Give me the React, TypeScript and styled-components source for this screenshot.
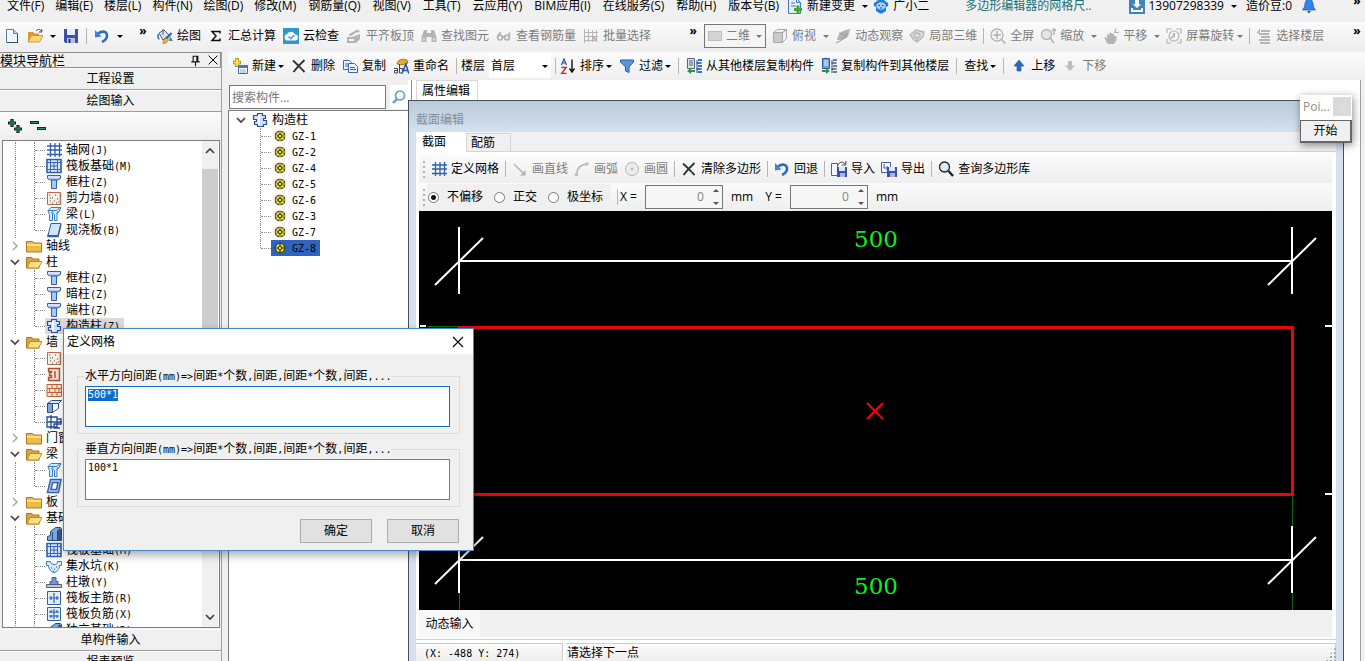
import React, { useEffect, useRef } from "react";
import styled, { createGlobalStyle, css } from "styled-components";

const UI = `"Open Sans", "Noto Sans CJK SC", sans-serif`;

const GlobalStyle = createGlobalStyle`
  * { box-sizing: border-box; }
  html, body, #root { height: 100%; margin: 0; overflow: hidden; }
  body { background: #f0f0f0; font: 12px/16px ${UI}; color: #000; }
  button, input, textarea, select { font: inherit; color: inherit; margin: 0; }
  button { background: none; border: 0; padding: 0; white-space: nowrap; }
`;

/* ---------- icons ---------- */

const B = "#2f5fae";
const G = "#b4b4b4";

const ICONS: Record<string, React.ReactNode> = {
  newDoc: (
    <g>
      <path d="M2.500 1.500h7l4 4v9h-11z" fill="#f2f7ff" stroke="#5a77a8" />
      <path d="M9.500 1.500v4h4" fill="#c5d6f0" stroke="#5a77a8" />
      <path d="M3 14.500h11M13.500 6v8.500" stroke="#33496f" />
    </g>
  ),
  open: (
    <g>
      <path d="M1 4h5l1.500 1.500H12V8L4 14H1z" fill="#d9992b" />
      <path d="M4.500 7.500H16L12.500 14H1z" fill="#ffd978" stroke="#c48a24" strokeWidth=".8" />
      <path d="M9 3c2-2.500 4.500-2 5.500.5M14.800 1v3h-3" fill="none" stroke="#444" />
    </g>
  ),
  save: (
    <g>
      <path d="M1 1h14v14H2.500L1 13.500z" fill="#3e4fae" />
      <path d="M4 1h8v6H4z" fill="#e8edfb" />
      <path d="M4 10h8v5H4z" fill="#b4bfe6" />
      <path d="M5.500 11h2v4h-2z" fill="#26327c" />
    </g>
  ),
  undo: (
    <g>
      <path d="M4 5.500C8 2.500 13 3 13 7.500c0 3-2 5-5 6.500" fill="none" stroke="#2e6cc4" strokeWidth="2.600" />
      <path d="M1 2v7.500l6.500-1z" fill="#3f82dc" />
    </g>
  ),
  paint: (
    <g>
      <path d="M2 5l5-3 5 5-6 5z" fill="#dfe7f3" stroke="#4a6087" />
      <path d="M6 1v6" stroke="#4a6087" />
      <path d="M1.500 6C.5 8 1 11 2.500 11" fill="none" stroke="#3c6fc0" strokeWidth="1.500" />
      <path d="M14.500 5L9 11" stroke="#3163b8" strokeWidth="2" />
      <path d="M6 15.500c0-4 2-5.500 5-5 1 3-2 5-5 5z" fill="#e8bb2d" stroke="#8d6a15" strokeWidth=".6" />
      <path d="M13 8l3 5h-4z" fill="#4c7fd0" />
    </g>
  ),
  sigma: <path d="M12 5.500V3.500H4l4 4.500-4 4.500h8v-2" fill="none" stroke="#111" strokeWidth="1.500" />,
  cloudCheck: (
    <g>
      <path d="M0 0h16v16H0z" fill="#2f98c9" />
      <path d="M4.500 12.500a3.300 3.300 0 01-.3-6.500A4.300 4.300 0 0112 6.500a3 3 0 010 6z" fill="#fff" />
      <path d="M5.500 8.500l2.300 2.300 3.400-3.600" fill="none" stroke="#2f98c9" strokeWidth="1.400" />
    </g>
  ),
  slabTop: (
    <g fill={G}>
      <path d="M2 7l9-5.500 3 1.500-2 2-1-1-6 4z" />
      <path d="M1 9h5l8-3v5l-4 4H1zM3 11v2h5v-2z" fillRule="evenodd" />
    </g>
  ),
  binocular: (
    <g fill={G}>
      <path d="M3 2h3v3h4V2h3l2.500 7v5h-5v-5h-5v5h-5V9z" />
      <path d="M2 10.500h2v2H2zM12 10.500h2v2h-2z" fill="#e6e6e6" />
    </g>
  ),
  glasses: (
    <g fill="none" stroke={G} strokeWidth="1.800">
      <circle cx="4" cy="9.500" r="2.400" />
      <circle cx="11" cy="9.500" r="2.400" />
      <path d="M1.800 8l3-4M13.400 9V4.500M6.500 9h2" />
    </g>
  ),
  batch: (
    <g fill="none" stroke={G}>
      <path d="M1.500 1v14M1 4.500h14M5.500 1v13M9.500 2v12M13.500 2v12M1 8.500h14M1 12.500h11" />
      <path d="M9 8l5 5" strokeWidth="2" />
    </g>
  ),
  view2d: <path d="M1.500 3.500h13v9h-13z" fill="#d4d4d4" stroke="#bdbdbd" />,
  cube: (
    <g fill="#f0f0f0" stroke="#a8a8a8">
      <path d="M1.500 4.500h9v10h-9z" fill="#cacaca" />
      <path d="M1.500 4.500l4-3h9l-4 3zM10.500 4.500l4-3v9l-4 4z" />
    </g>
  ),
  orbit: (
    <g>
      <path d="M2 12C3 5 8 2 15 1c-1 7-4 11-10 11z" fill={G} />
      <path d="M1 15c5-2 9-5 12-10M4 5c3 0 6 2 8 5" stroke="#989898" fill="none" />
    </g>
  ),
  local3d: (
    <g fill="#ddd" stroke={G} strokeWidth="1.300">
      <path d="M1 7l6-5 8 2-1 5-6 5-3-2z" />
      <path d="M5 8a3 2.500 0 106-1 3 2.500 0 10-6 1zM8 14V9" />
    </g>
  ),
  fullscreen: (
    <g fill="none" stroke={G} strokeWidth="1.300">
      <circle cx="7" cy="7" r="6" />
      <path d="M7 3v8M3 7h8M11.500 11.500l4 4" strokeWidth="1.600" />
    </g>
  ),
  zoomIn: (
    <g fill="none" stroke={G} strokeWidth="1.400">
      <circle cx="6.500" cy="6.500" r="5" fill="#e6e6e6" />
      <path d="M10 10l4 5M14 1v6M12 3l2-2 2 2" strokeWidth="1.600" />
    </g>
  ),
  pan: (
    <g fill={G}>
      <path d="M1 9l3 1V6l2 1 1-3 2 1.500 2 .5v2h2.500v4L11 16H4.500z" />
      <path d="M12.500 0l1.500 2h-1v2h2V3l1 1.500L15 6V5h-4z" />
    </g>
  ),
  rotate: (
    <g fill="none" stroke={G} strokeWidth="1.200">
      <path d="M1 5V1h5M10 1h5v5M15 11v4h-4M5 15H1v-4" />
      <circle cx="8" cy="8" r="5" />
      <path d="M8 5v3l-3 2" strokeWidth="2" />
    </g>
  ),
  floors: (
    <g stroke={G} strokeWidth="2">
      <path d="M5 3h9M3 6h10M5 9h9M3 12h11M4 15h10" />
      <path d="M4 1L1 5h3" strokeWidth="1" fill={G} />
    </g>
  ),
  addItem: (
    <g>
      <path d="M5 0v9M1 4.500h8" stroke="#b48a12" strokeWidth="3.600" />
      <path d="M5 1v7M1.800 4.500h6.400" stroke="#ffe04a" strokeWidth="2" />
      <path d="M6.500 7.500h9v8h-9z" fill="#fff" stroke="#4668a8" />
      <path d="M6 7h10v3H6z" fill="#4877c8" />
      <path d="M8 12h6M8 14h6" stroke="#8aa4d2" />
    </g>
  ),
  cross: <path d="M2 2.500c3.500 3 7 7 11.500 11.500M13.500 2C9 6 6 9.500 2.500 14" fill="none" stroke="#333" strokeWidth="1.900" />,
  copy: (
    <g fill="#eef4ff" stroke="#3c66b4">
      <path d="M1.500 2.500h6l2 2v7h-8z" />
      <path d="M3 6h4M3 8h4" />
      <path d="M6.500 5.500h6l3 3v6h-9z" />
      <path d="M8 9.500h5M8 11.500h6" />
    </g>
  ),
  rename: (
    <g>
      <path d="M4 6c0-4 5-6 10-4l1 3-6 2z" fill="#e2ae2b" stroke="#7a5a14" strokeWidth=".7" />
      <path d="M1 10.500h3.500V15H1.500v-2.500h3M6.500 6v9h3v-4.500h-3" fill="none" stroke="#444" />
      <path d="M9 15.500L12.800 6l3 9.500M10.200 12.500h5" fill="none" stroke="#2750b0" strokeWidth="1.500" />
    </g>
  ),
  sort: (
    <g fill="none">
      <path d="M1.500 7L4 1l2.500 6M2.300 5h3.400" stroke="#2c4fa6" strokeWidth="1.200" />
      <path d="M1.500 9.500h4.800l-4.800 6h5" stroke="#a8333c" strokeWidth="1.300" />
      <path d="M12 1.500v12M9.500 10.500l2.500 3.500 2.500-3.500" stroke="#111" strokeWidth="1.400" />
    </g>
  ),
  filter: <path d="M1.500 2h13v2L10 9v5.500L6.500 13V9L1.500 4z" fill="#5d94e2" stroke="#2b5cab" />,
  fromFloor: (
    <g>
      <path d="M1.500.500h7v10h-7z" fill="#d9e0ea" stroke="#56657c" />
      <path d="M3 3h4M3 5h4M3 7h4" stroke="#56657c" />
      <path d="M12 2h4M10.500 5h5M12 8h4M10.500 11h5M12 14h4" stroke="#3a74c8" strokeWidth="2" />
      <path d="M11 2v13" stroke="#2c559a" />
      <path d="M1 13l4-3v2h4v2H5v2z" fill="#2a9440" />
    </g>
  ),
  toFloor: (
    <g>
      <path d="M1.500.500h7v10h-7z" fill="#6f9fe0" stroke="#2a56a4" />
      <path d="M3 3h4M3 5h4M3 7h4" stroke="#e6efff" />
      <path d="M12 2h4M10.500 5h5M12 8h4M10.500 11h5M12 14h4" stroke="#6c7f9e" strokeWidth="2" />
      <path d="M11 2v13" stroke="#44546e" />
      <path d="M9 13l-4-3v2H1v2h4v2z" fill="#2a9440" />
    </g>
  ),
  up: <path d="M8 2l5 6h-3v5H6V8H3z" fill="#2f67c4" stroke="#1f4a98" strokeWidth=".6" />,
  down: <path d="M8 13L3 7.500h3V3h4v4.500h3z" fill="#bcbcbc" />,
  search: (
    <g fill="none" stroke="#5b9fdc">
      <circle cx="9" cy="6.500" r="4.500" strokeWidth="1.700" />
      <path d="M6 10l-4 4" strokeWidth="2.400" />
    </g>
  ),
  magnify: (
    <g fill="none" stroke="#222">
      <circle cx="6.500" cy="6" r="5" fill="#d9ecf8" strokeWidth="1.300" />
      <path d="M10.500 10l4.500 5" strokeWidth="2.400" />
    </g>
  ),
  grid: (
    <g stroke={B} strokeWidth="1.300">
      <path d="M4.500 1v14M9 1v14M13.500 1v14M1 4h15M1 8h15M1 12.500h15" />
    </g>
  ),
  line: (
    <g stroke={G} strokeWidth="1.500" fill={G}>
      <path d="M2 3l9 9" />
      <path d="M13.500 14.500V9L8 14.500z" stroke="none" />
    </g>
  ),
  arc: (
    <g stroke={G} fill="none">
      <path d="M2.500 14C3 7 7 3 14 3" strokeWidth="1.500" />
      <path d="M1.500 12.500h2v2h-2zM12 2h2v2h-2z" fill="#ddd" />
    </g>
  ),
  circle: (
    <g fill="#ececec" stroke={G}>
      <circle cx="8" cy="8" r="6.500" />
      <circle cx="8" cy="8" r="1" fill={G} />
    </g>
  ),
  importIcon: (
    <g>
      <path d="M.500 2.500h6v12h-6z" fill="#f4f7ff" stroke="#4a62a0" />
      <path d="M7 4C8 1 12 0 14 3M14.800 0v4h-4" fill="none" stroke="#444" />
      <path d="M6 6h10v10H6z" fill="#3f4fa8" />
      <path d="M8 6h6v4H8z" fill="#e1e7fa" />
      <path d="M9 12h5v4H9z" fill="#aab6e2" />
    </g>
  ),
  exportIcon: (
    <g>
      <path d="M.500 1.500h9v10h-9z" fill="#f4f7ff" stroke="#4a62a0" />
      <path d="M3 3v4h4M5.500 5l2 2-2 2" fill="none" stroke="#2c5ab0" />
      <path d="M6 6h10v10H6z" fill="#3f4fa8" />
      <path d="M8 6h6v4H8z" fill="#e1e7fa" />
      <path d="M9 12h5v4H9z" fill="#aab6e2" />
    </g>
  ),
  docPlus: (
    <g>
      <path d="M1.500.500h8l4 4v11h-12z" fill="#e4effc" stroke="#4479bd" />
      <path d="M9.500.500v4h4M4 5h4M4 8h5" fill="none" stroke="#4479bd" />
      <path d="M11 7.500v8M7 11.500h8" stroke="#46a52c" strokeWidth="3" />
    </g>
  ),
  mascot: (
    <g>
      <path d="M3 4C1 4 .500 6 1 8l2 1v4l4 2.500h2L13 13V9l2-1c.500-2 0-4-2-4-1-3-9-3-10 0z" fill="#1b80d8" />
      <ellipse cx="8" cy="8" rx="4.800" ry="3.700" fill="#9fd3fb" />
      <path d="M5.500 7.500h1.500M9 7.500h1.500M7 10h2" stroke="#0b4c8c" strokeWidth="1.200" />
    </g>
  ),
  user: (
    <g>
      <path d="M0 0h16v16H0z" fill="#3c86b8" />
      <path d="M6 2h4v4l2 .5L8 10 4 6.500 6 6z" fill="#fff" />
      <path d="M3 10v3h10v-3" fill="none" stroke="#fff" strokeWidth="1.800" />
    </g>
  ),
  bell: (
    <g>
      <path d="M8 1c4 0 4 5 4.500 8l2 3h-13l2-3C4 6 4 1 8 1z" fill="#2f86ea" stroke="#1c56a4" strokeWidth=".7" />
      <path d="M6 13h4l-2 2.500z" fill="#1c56a4" />
    </g>
  ),
  folder: (
    <g>
      <path d="M.500 3.500h6l1 1.500h8v9H.500z" fill="#eebb45" stroke="#a87a1c" />
      <path d="M1 6h14v2H1z" fill="#ffe08d" />
    </g>
  ),
  folderOpen: (
    <g>
      <path d="M.500 3.500h5.500l1 1.500h6v9H.500z" fill="#dfa531" stroke="#a87a1c" />
      <path d="M4 7.500h12L12.500 14H1z" fill="#ffdf85" stroke="#a87a1c" strokeWidth=".8" />
    </g>
  ),
  raft: (
    <g fill="none" stroke={B}>
      <path d="M1 1.500h14v13H1z" strokeWidth="1.600" fill="#dbe8fb" />
      <path d="M4.500 4.500h7v7h-7zM8 4v8M4 8h8M1 4.500h3M12 4.500h3M1 11.500h3M12 11.500h3M4.500 1v3M11.500 1v3M4.500 12v3M11.500 12v3" />
    </g>
  ),
  column: (
    <g fill="#a9c8f4" stroke={B}>
      <path d="M1.500 1.500h13v3l-3 1.500h-7l-3-1.500z" />
      <path d="M5.500 6h5v8.500h-5z" />
      <path d="M2 3h12" stroke="#fff" />
    </g>
  ),
  wall: (
    <g>
      <path d="M1.500 2.500h13v12h-13z" fill="#f8efe8" stroke="#b76e50" />
      <path d="M3 5h1M6 8h1M4 11h1M8 11h1M11 9h1M12 12h1M9 5h1M6 13h1M10 13h1M4 8h1" stroke="#444" />
      <path d="M14.500 3v12" stroke="#b76e50" strokeWidth="1.500" />
    </g>
  ),
  beam: (
    <g fill="#d5ebfa" stroke="#3581c8">
      <path d="M2 4.500l3-3h10l-2 4-2 1v8H8.500v-6L6.500 7v7.500h-3V9z" />
      <path d="M2 4.500h9l3-3M5 7l3-2.500M11 8l3-4" fill="none" />
    </g>
  ),
  slab: (
    <g>
      <path d="M5 1.500h10l-3 12H2z" fill="#d3e5fb" stroke={B} />
      <path d="M2 12.500v2h10l3-12" fill="none" stroke={B} strokeWidth="1.400" />
    </g>
  ),
  slabRing: (
    <g fill="none" stroke={B} strokeWidth="1.500">
      <path d="M4.500 1.500h10.500l-2.500 13H1.500z" fill="#b9d2f5" />
      <path d="M6.500 4.500h5.500l-1.500 7H5z" fill="#fff" />
    </g>
  ),
  tieColumn: (
    <g fill="#cfe0fa" stroke="#27509c">
      <path d="M5.500 1.500h5v2h3v3h-2v2h3v4h-3v2h-6v-2h-3v-3h2v-2h-3v-4h4z" strokeWidth="1.200" />
      <path d="M7 3v10" stroke="#fff" strokeWidth="2" />
    </g>
  ),
  wallI: <path d="M2.500 2.500h11v12h-11v-3h3v-2h-2v-3h2v-1h-3zM9 5v7" fill="#f6ddd0" stroke="#a5502f" strokeWidth="1.400" />,
  brick: (
    <g stroke="#bf6438" fill="none">
      <path d="M1 2.500h14.500v12H1z" fill="#fbe3d4" />
      <path d="M1 6.500h14M1 10.500h14M6 3v3M11 3v3M3.500 7v3M9 7v3M13 7v3M6 11v3M11 11v3" />
    </g>
  ),
  opening: (
    <g stroke="#2c4a7c">
      <path d="M1.500 5.500l4-3h10l-3 3z" fill="#dfe8f4" />
      <path d="M1.500 5.500h5v9h-5z" fill="#7fa6db" />
      <path d="M6.500 5.500h6v5l-6 4z" fill="#fff" />
    </g>
  ),
  hidden: (
    <g fill="none" stroke="#23489a" strokeWidth="1.300">
      <path d="M1 3h10v10H1zM5 1v14M1 8h15M11 5h4v5H8v4h6" />
    </g>
  ),
  foundation: (
    <g stroke="#234b80">
      <path d="M1.500 14.500v-4l3-1v-4l5-4h5l-3 4v9z" fill="#79a9dc" />
      <path d="M11.500 5.500l4-3v12h-4zM6.500 6v8" fill="#31588f" />
    </g>
  ),
  pit: (
    <g fill="#d5e9fb" stroke="#3a7cc4">
      <path d="M.500 3.500h4c0 4 7 4 7 0h4v4h-2c0 4-3 7-5.500 7S2.500 11 2.500 7.500h-2z" />
      <path d="M5 10h1M8 11h1M10 9h1M7 13h1" stroke="#444" />
    </g>
  ),
  pier: (
    <g stroke="#4a5f80">
      <path d="M6 3.500h4v4h2v3H4v-3h2z" fill="#6f9bdc" />
      <path d="M.500 10.500h15v3H.500z" fill="#c9c9c9" />
    </g>
  ),
  mainBar: (
    <g fill="none" stroke={B}>
      <path d="M1.500 1.500h13v13h-13z" fill="#e2edfc" />
      <path d="M8 3v10M3 8h10M5 6v4M11 6v4" strokeWidth="1.200" />
    </g>
  ),
  negBar: (
    <g fill="none" stroke={B}>
      <path d="M1.500 1.500h13v13h-13z" fill="#e2edfc" />
      <path d="M8 3v10M3 6h10M3 10h10M5 4v3M11 4v3M5 9v3M11 9v3" strokeWidth="1.200" />
    </g>
  ),
  gear: (
    <g>
      <path d="M6 3v10M10 3v10M3 6h10M3 10h10" stroke="#1c1c08" strokeWidth="2.400" />
      <path d="M6 3.500v9M10 3.500v9M3.500 6h9M3.500 10h9" stroke="#efea20" strokeWidth="1.200" />
      <circle cx="8" cy="8" r="3.600" fill="#efea20" />
      <path d="M8 2.500v11M2.500 8h11" stroke="#1c1c08" strokeDasharray="1.500 1" />
      <circle cx="8" cy="8" r="1.800" fill="#f6f24a" stroke="#1c1c08" />
    </g>
  ),
  plus2: (
    <g>
      <path d="M5 1v8M1 5h8M11 7v8M7 11h8" stroke="#0c2c24" strokeWidth="3.200" />
      <path d="M5 2v6M2 5h6M11 8v6M8 11h6" stroke="#2f9079" strokeWidth="1" />
    </g>
  ),
  minus2: (
    <g>
      <path d="M0 4.500h9M7 10.500h9" stroke="#0c2c24" strokeWidth="3" />
      <path d="M1 4.500h7M8 10.500h7" stroke="#2f9079" strokeWidth="1" />
    </g>
  ),
  pin: <path d="M5.500 3v6M5.500 3.500h5M9.500 3v6M10.500 3v6M3.500 9.500h9M8 9.500V14" stroke="#111" strokeWidth="1.200" fill="none" />,
  close: <path d="M3 3l10 10M13 3L3 13" stroke="currentColor" strokeWidth="1.100" />,
  chevDown: <path d="M4 6l4 4 4-4" fill="none" stroke="#404040" strokeWidth="1.700" />,
  chevUp: <path d="M4 10l4-4 4 4" fill="none" stroke="#404040" strokeWidth="1.700" />,
  chevRight: <path d="M6 4l4 4-4 4" fill="none" stroke="#a0a0a0" strokeWidth="1.400" />,
};

const Svg = styled.svg`
  display: block;
  flex: none;
`;

const Icon = ({ name, size = 16 }: { name: string; size?: number }) => (
  <Svg width={size} height={size} viewBox="0 0 16 16" aria-hidden="true">
    {ICONS[name]}
  </Svg>
);

/* ---------- mixed-width text ---------- */

const Mono = styled.span`
  font: 10px/12px "DejaVu Sans Mono", monospace;
  white-space: pre;
`;

const Mixed = ({ text }: { text: string }) => (
  <span>
    {text
      .split(/([\x20-\x7e]+)/)
      .filter(Boolean)
      .map((run, i) => (/^[\x20-\x7e]/.test(run) ? <Mono key={i}>{run}</Mono> : run))}
  </span>
);

/* ---------- bars ---------- */

const barFill = css`
  background: linear-gradient(#fbfbfb, #eeeeee);
`;

const Page = styled.div`
  height: 100vh;
  display: flex;
  flex-direction: column;
  overflow: hidden;
  background: #f0f0f0;
`;

const MenuBar = styled.nav`
  flex: none;
  height: 28px;
  margin: -8px 0 2px;
  padding: 0 4px 0 7px;
  display: flex;
  align-items: center;
  gap: 8px;
`;

const MenuButton = styled.button<{ $tone?: string }>`
  display: flex;
  align-items: center;
  gap: 4px;
  color: ${(p) => p.$tone || "#000"};
`;

const MenuGroup = styled.div<{ $before?: number; $gap?: number }>`
  display: flex;
  align-items: center;
  gap: ${(p) => p.$gap ?? 11}px;
  margin-left: ${(p) => p.$before ?? 0}px;
`;

const Arrow = styled.span<{ $before?: number; $off?: boolean }>`
  flex: none;
  margin-left: ${(p) => p.$before ?? 0}px;
  border: 3px solid transparent;
  border-bottom-width: 0;
  border-top-color: ${(p) => (p.$off ? "#777" : "#000")};
`;

const ToolBar = styled.div`
  ${barFill}
  flex: none;
  height: 28px;
  display: flex;
  align-items: center;
  gap: 7px;
  padding: 0 4px;
`;

const Tools = styled.div<{ $before?: number; $gap?: number }>`
  display: flex;
  align-items: center;
  gap: ${(p) => p.$gap ?? 7}px;
  margin-left: ${(p) => p.$before ?? 0}px;
`;

const ToolButton = styled.button`
  flex: none;
  display: flex;
  align-items: center;
  svg + span {
    margin-left: 4px;
  }
  &:disabled {
    color: #7c7c7c;
  }
`;

const Sep = styled.span`
  flex: none;
  width: 1px;
  height: 16px;
  background: #b5b5b5;
`;

const More = styled.button`
  flex: none;
  width: 8px;
  padding-bottom: 10px;
  font-weight: 700;
`;

const Spring = styled.span`
  flex: 1;
`;

const Tool = ({ icon, label, off, arrow }: { icon?: string; label?: string; off?: boolean; arrow?: number }) => (
  <ToolButton type="button" disabled={off} aria-label={label || icon}>
    {icon && <Icon name={icon} />}
    {label && <span>{label}</span>}
    {arrow !== undefined && <ArrowBox $before={arrow}><Arrow $off={off} /></ArrowBox>}
  </ToolButton>
);

const ArrowBox = styled.i<{ $before: number }>`
  display: flex;
  padding-left: ${(p) => p.$before}px;
`;

const Combo = styled.label<{ $framed?: boolean }>`
  flex: none;
  height: 24px;
  display: flex;
  align-items: center;
  gap: 3px;
  padding: 0 3px 0 2px;
  background: ${(p) => (p.$framed ? "#f4f4f4" : "#fff")};
  border: ${(p) => (p.$framed ? "1px solid #777" : "0")};
  color: ${(p) => (p.$framed ? "#7c7c7c" : "#000")};
`;

const Select = styled.select<{ $w: number }>`
  appearance: none;
  border: 0;
  background: none;
  padding: 0;
  width: ${(p) => p.$w}px;
  height: 20px;
  outline: 0;
`;

/* ---------- workspace ---------- */

const Work = styled.main`
  flex: 1;
  min-height: 0;
  margin-top: 2px;
  display: flex;
  gap: 6px;
`;

const Nav = styled.aside`
  flex: none;
  width: 222px;
  margin-bottom: -12px;
  display: flex;
  flex-direction: column;
  border-right: 1px solid #a0a0a0;
`;

const NavHeader = styled.header`
  flex: none;
  height: 16px;
  display: flex;
  align-items: center;
  gap: 3px;
  border: 1px solid #8c8c8c;
  border-left: 0;
  font-size: 13px;
  line-height: 14px;
  white-space: nowrap;
`;

const NavButton = styled.button`
  flex: none;
  height: 22px;
  border: solid #9a9a9a;
  border-width: 1px 0;
  border-top-color: #fff;
  text-align: center;
`;

const NavTools = styled.div`
  ${barFill}
  flex: none;
  height: 28px;
  display: flex;
  align-items: center;
  gap: 7px;
  padding-left: 7px;
`;

const TreeFrame = styled.div`
  flex: 1;
  min-height: 0;
  display: flex;
  margin: 0 1px 1px 2px;
  border: 1px solid #7d7d7d;
  background: #fff;
`;

const TreeList = styled.ul`
  flex: 1;
  min-width: 0;
  margin: 0;
  padding: 1px 0 0;
  list-style: none;
  overflow: hidden;
`;

const Branch = styled.li`
  height: 16px;
  display: flex;
  align-items: center;
  white-space: nowrap;
`;

/* Vertical rail of the outer level; a parent row shows its chevron here. */
const Rail = styled.span`
  flex: none;
  width: 22px;
  height: 16px;
  padding-left: 4px;
  position: relative;
`;

const RailLine = styled(Rail)`
  &::after {
    content: "";
    position: absolute;
    left: 12px;
    top: 0;
    bottom: 0;
    border-left: 1px dotted #8a8a8a;
  }
`;

const Elbow = styled.span<{ $last?: boolean }>`
  flex: none;
  width: 11px;
  height: 16px;
  margin-left: 9px;
  position: relative;
  &::before {
    content: "";
    position: absolute;
    left: 0;
    top: 0;
    height: ${(p) => (p.$last ? 8 : 16)}px;
    border-left: 1px dotted #8a8a8a;
  }
  &::after {
    content: "";
    position: absolute;
    left: 1px;
    right: 0;
    top: 8px;
    border-top: 1px dotted #8a8a8a;
  }
`;

const Leaf = styled.span<{ $bg?: string }>`
  height: 16px;
  display: flex;
  align-items: center;
  gap: 4px;
  padding: 0 4px 0 1px;
  background: ${(p) => p.$bg || "transparent"};
`;

const ScrollTrack = styled.div`
  flex: none;
  width: 16px;
  display: flex;
  flex-direction: column;
  margin-right: 1px;
  background: #f0f0f0;
`;

const ScrollEnd = styled.button`
  flex: none;
  height: 20px;
`;

const Thumb = styled.div`
  flex: none;
  height: 78%;
  margin: 8px 0 auto;
  background: #cdcdcd;
`;

const Stage = styled.div`
  flex: 1;
  min-width: 0;
  display: flex;
  flex-direction: column;
`;

const Panes = styled.div`
  flex: 1;
  min-height: 0;
  display: flex;
`;

const ListPane = styled.section`
  flex: none;
  width: 180px;
  display: flex;
  flex-direction: column;
`;

const SearchRow = styled.div`
  flex: none;
  height: 30px;
  display: flex;
  align-items: center;
  gap: 4px;
  padding: 4px 0 0 1px;
`;

const SearchInput = styled.input`
  width: 157px;
  height: 24px;
  padding: 0 2px;
  border: 1px solid #777;
  background: #fff;
  &::placeholder {
    color: #767676;
    opacity: 1;
  }
`;

const SearchButton = styled.button`
  flex: 1;
  height: 24px;
  background: #fff;
  display: flex;
  align-items: center;
  justify-content: center;
`;

const ItemFrame = styled.div`
  flex: 1;
  display: flex;
  border: solid #7d7d7d;
  border-width: 1px 0 0 1px;
  background: #fff;
`;

const PropertyPane = styled.section`
  flex: 1;
  min-width: 0;
  display: flex;
  flex-direction: column;
  padding-right: 21px;
  background: #fff;
  box-shadow: inset -4px 0 #f0f0f0, inset -5px 0 #a0a0a0;
`;

const PropertyTabs = styled.div`
  flex: none;
  height: 20px;
  margin-left: 3px;
  padding-left: 4px;
  display: flex;
  border-left: 1px solid #8c8c8c;
`;

const PropertyTab = styled.button`
  padding: 0 7px 0 5px;
  border: 1px solid #d9d9d9;
  border-bottom: 0;
`;

const SectionWindow = styled.section`
  flex: 1;
  min-height: 0;
  display: flex;
  flex-direction: column;
  padding: 0 7px;
  border: solid #46505a;
  border-width: 1px 1px 0;
  background: linear-gradient(#b9cad9, #d5e1ee 31px);
`;

const SectionTitle = styled.h2`
  flex: none;
  height: 31px;
  margin: 0;
  padding-top: 11px;
  font: inherit;
  color: #858d96;
`;

const SectionTabs = styled.div`
  flex: none;
  height: 20px;
  display: flex;
  align-items: flex-end;
  background: #f0f0f0;
  border-bottom: 1px solid #d5d5d5;
`;

const SectionTab = styled.button<{ $active?: boolean }>`
  height: ${(p) => (p.$active ? 20 : 18)}px;
  width: ${(p) => (p.$active ? 50 : 45)}px;
  padding-left: ${(p) => (p.$active ? 6 : 4)}px;
  text-align: left;
  border: ${(p) => (p.$active ? "0" : "1px solid #d5d5d5")};
  border-bottom: 0;
  background: ${(p) => (p.$active ? "#fff" : "#f0f0f0")};
  margin-bottom: ${(p) => (p.$active ? -1 : 0)}px;
`;

const SectionBody = styled.div`
  flex: 1;
  min-height: 0;
  display: flex;
  flex-direction: column;
  padding: 3px 4px 2px 3px;
  background: #fff;
  border-bottom: 1px solid #d0d0d0;
`;

const SectionBar = styled.div`
  ${barFill}
  flex: none;
  height: 28px;
  display: flex;
  align-items: center;
  gap: 6px;
  padding-left: 4px;
`;

const Grip = styled.span`
  flex: none;
  width: 2px;
  height: 17px;
  background: repeating-linear-gradient(#b0b0b0 0 2px, transparent 2px 5px);
`;

const RadioGroup = styled.div`
  flex: none;
  height: 26px;
  display: flex;
  align-items: center;
  gap: 11px;
  padding: 0 8px 0 1px;
  margin-left: -4px;
  background: #f0f0f0;
`;

const RadioLabel = styled.label`
  display: flex;
  align-items: center;
  gap: 8px;
`;

const Radio = styled.input`
  appearance: none;
  width: 11px;
  height: 11px;
  border: 1px solid #777;
  border-radius: 50%;
  background: #fff;
  &:checked {
    background: radial-gradient(#111 0 2px, #fff 3px);
  }
`;

const Offsets = styled.div`
  display: flex;
  align-items: center;
  gap: 12px;
  margin-left: -4px;
`;

const OffsetLabel = styled.label`
  flex: none;
  display: flex;
  align-items: center;
  gap: 8px;
  white-space: pre;
`;

const Spinner = styled.span`
  display: flex;
  align-items: center;
  width: 78px;
  height: 24px;
  padding-right: 3px;
  border: 1px solid #777;
  background: #f6f6f6;
`;

const SpinnerInput = styled.input`
  flex: 1;
  min-width: 0;
  border: 0;
  padding: 0 9px 0 0;
  background: none;
  text-align: right;
  color: #858585;
`;

const SpinnerArrows = styled.span`
  display: flex;
  flex-direction: column;
  gap: 10px;
`;

const Tip = styled.button<{ $up?: boolean }>`
  border: 3px solid transparent;
  ${(p) => (p.$up ? "border-top-width: 0; border-bottom-color: #555;" : "border-bottom-width: 0; border-top-color: #555;")}
`;

const Canvas = styled.div`
  flex: 1;
  min-height: 0;
  background: #000;
  svg {
    display: block;
    width: 100%;
    height: 100%;
  }
`;

const InputBar = styled.div`
  flex: none;
  height: 27px;
  display: flex;
  background: #f0f0f0;
`;

const InputButton = styled.button`
  width: 61px;
  background: #f8f8f8;
`;

const StatusBar = styled.footer`
  flex: none;
  height: 21px;
  display: flex;
  gap: 3px;
  padding-top: 3px;
  background: #fff;
`;

const StatusCell = styled.span<{ $w?: number }>`
  ${barFill}
  ${(p) => (p.$w ? `flex: none; width: ${p.$w}px; padding-left: 8px;` : "flex: 1; padding-left: 1px;")}
  border-top: 1px solid #cfcfcf;
  border-right: 1px solid #cfcfcf;
  line-height: 18px;
`;

const SizeGrip = styled.span`
  flex: none;
  width: 11px;
  margin-left: -14px;
  background: radial-gradient(circle, #a8a8a8 1px, transparent 1px) 0 0 / 4px 4px;
  clip-path: polygon(100% 20%, 100% 100%, 0 100%);
`;

/* ---------- floating windows ---------- */

const Dialog = styled.form`
  position: absolute;
  left: 63px;
  top: 328px;
  width: 411px;
  height: 223px;
  display: flex;
  flex-direction: column;
  border: 1px solid #3f8bd2;
  background: #f0f0f0;
  box-shadow: 2px 4px 9px rgba(0, 0, 0, 0.35);
`;

const DialogTitle = styled.header`
  flex: none;
  height: 25px;
  padding: 0 7px 0 3px;
  display: flex;
  align-items: center;
  justify-content: space-between;
  background: #fff;
`;

const DialogBody = styled.div`
  padding: 14px 13px 0;
  display: flex;
  flex-direction: column;
  gap: 7px;
`;

const Group = styled.fieldset`
  margin: 0;
  padding: 2px 9px 6px 7px;
  min-width: 0;
  border: 1px solid #dcdcdc;
`;

const Legend = styled.legend`
  padding: 0;
  height: 16px;
  white-space: nowrap;
`;

const Area = styled.textarea`
  display: block;
  width: 100%;
  height: 41px;
  padding: 2px;
  border: 1px solid #7a7a7a;
  outline: 0;
  resize: none;
  background: #fff;
  font: 10px/12px "DejaVu Sans Mono", monospace;
  &:focus {
    border-color: #0f6cbd;
  }
  &::selection {
    background: #0c6cc8;
    color: #fff;
  }
`;

const DialogButtons = styled.div`
  display: flex;
  justify-content: flex-end;
  gap: 15px;
  padding: 5px 1px 0 0;
`;

const DialogButton = styled.button`
  width: 72px;
  height: 24px;
  border: 1px solid #adadad;
  background: #e1e1e1;
`;

const Floating = styled.aside`
  position: absolute;
  right: 13px;
  top: 95px;
  width: 52px;
  background: #fff;
  box-shadow: 1px 2px 8px rgba(0, 0, 0, 0.45);
`;

const FloatingTitle = styled.header`
  height: 25px;
  padding: 2px 1px 0 3px;
  display: flex;
  justify-content: space-between;
  color: #8f8f8f;
  line-height: 20px;
`;

const FloatingClose = styled.button`
  width: 18px;
  height: 19px;
  background: #dadada;
  color: #e8e8e8;
  display: flex;
  align-items: center;
  justify-content: center;
`;

const FloatingButton = styled.button`
  display: block;
  width: 100%;
  height: 23px;
  background: #f0f0f0;
  border: solid #666;
  border-width: 1px 2px 2px 1px;
`;

/* ---------- data ---------- */

const EDIT_MENUS = ["文件(F)", "编辑(E)", "楼层(L)", "构件(N)", "绘图(D)", "修改(M)"];

const APP_MENUS = [
  "钢筋量(Q)", "视图(V)", "工具(T)", "云应用(Y)", "BIM应用(I)", "在线服务(S)", "帮助(H)", "版本号(B)",
];

type Node = { kind: "open" | "shut" | "leaf"; icon?: string; text: string; last?: boolean; active?: boolean };
const leaf = (icon: string, text: string, last = false, active = false): Node => ({ kind: "leaf", icon, text, last, active });

const TREE: Node[] = [
  leaf("grid", "轴网(J)"),
  leaf("raft", "筏板基础(M)"),
  leaf("column", "框柱(Z)"),
  leaf("wall", "剪力墙(Q)"),
  leaf("beam", "梁(L)"),
  leaf("slab", "现浇板(B)", true),
  { kind: "shut", text: "轴线" },
  { kind: "open", text: "柱" },
  leaf("column", "框柱(Z)"),
  leaf("column", "暗柱(Z)"),
  leaf("column", "端柱(Z)"),
  leaf("tieColumn", "构造柱(Z)", true, true),
  { kind: "open", text: "墙" },
  leaf("wall", "剪力墙(Q)"),
  leaf("wallI", "人防门框墙(RF)"),
  leaf("brick", "砌体墙(Q)"),
  leaf("opening", "暗梁(A)"),
  leaf("hidden", "砌体加筋(Y)", true),
  { kind: "shut", text: "门窗洞" },
  { kind: "open", text: "梁" },
  leaf("beam", "梁(L)"),
  leaf("slabRing", "圈梁(E)", true),
  { kind: "shut", text: "板" },
  { kind: "open", text: "基础" },
  leaf("foundation", "基础梁(F)"),
  leaf("raft", "筏板基础(M)"),
  leaf("pit", "集水坑(K)"),
  leaf("pier", "柱墩(Y)"),
  leaf("mainBar", "筏板主筋(R)"),
  leaf("negBar", "筏板负筋(X)"),
  leaf("foundation", "独立基础(D)"),
];

const ITEMS = ["GZ-1", "GZ-2", "GZ-4", "GZ-5", "GZ-6", "GZ-3", "GZ-7", "GZ-8"];

const TreeRow = ({ node }: { node: Node }) =>
  node.kind === "leaf" ? (
    <Branch>
      <RailLine />
      <Elbow $last={node.last} />
      <Leaf $bg={node.active ? "#d9d9d9" : undefined}>
        <Icon name={node.icon!} />
        <Mixed text={node.text} />
      </Leaf>
    </Branch>
  ) : (
    <Branch>
      <Rail>
        <Icon name={node.kind === "open" ? "chevDown" : "chevRight"} />
      </Rail>
      <Leaf>
        <Icon name={node.kind === "open" ? "folderOpen" : "folder"} />
        <span>{node.text}</span>
      </Leaf>
    </Branch>
  );

const Offset = ({ axis }: { axis: string }) => (
  <OffsetLabel>
    {axis + " ="}
    <Spinner>
      <SpinnerInput defaultValue="0" />
      <SpinnerArrows>
        <Tip type="button" $up aria-label="增加" />
        <Tip type="button" aria-label="减少" />
      </SpinnerArrows>
    </Spinner>
    mm
  </OffsetLabel>
);

const Dimension = ({ y }: { y: number }) => (
  <g stroke="#fff" strokeWidth="2">
    <path d={`M40 ${y}H873M40 ${y - 34}v67M873 ${y - 34}v67`} />
    <path d={`M16 ${y + 24}l48-47M849 ${y + 24}l48-47`} />
  </g>
);

const Drawing = () => (
  <svg viewBox="0 0 913 399" preserveAspectRatio="none">
    <path d="M40.500 283V399M873.500 283V399M8 115.500H40" stroke="#0b6a1c" />
    <Dimension y={50} />
    <Dimension y={349} />
    <path d="M1 115h6M906 115h7M906 283h7" stroke="#fff" strokeWidth="2" />
    <path d="M40 116.500H873.500V283.500H40z" fill="none" stroke="#e60808" strokeWidth="3" />
    <path d="M448 192l16 16M464 192l-16 16" stroke="#f00" strokeWidth="2" />
    <g fill="#0cf01c" fontFamily="DejaVu Serif, serif" fontSize="23" textAnchor="middle">
      <text x="457" y="36">500</text>
      <text x="457" y="383">500</text>
    </g>
  </svg>
);

const GridDialog = () => {
  const first = useRef<HTMLTextAreaElement>(null);
  useEffect(() => {
    first.current?.focus();
    first.current?.select();
  }, []);
  return (
    <Dialog role="dialog" aria-label="定义网格" onSubmit={(e) => e.preventDefault()}>
      <DialogTitle>
        定义网格
        <button type="button" aria-label="关闭">
          <Icon name="close" />
        </button>
      </DialogTitle>
      <DialogBody>
        <Group>
          <Legend id="horizontal">
            <Mixed text="水平方向间距(mm)=>间距*个数,间距,间距*个数,间距,..." />
          </Legend>
          <Area ref={first} aria-labelledby="horizontal" defaultValue="500*1" spellCheck={false} />
        </Group>
        <Group>
          <Legend id="vertical">
            <Mixed text="垂直方向间距(mm)=>间距*个数,间距,间距*个数,间距,..." />
          </Legend>
          <Area aria-labelledby="vertical" defaultValue="100*1" spellCheck={false} />
        </Group>
        <DialogButtons>
          <DialogButton type="submit">确定</DialogButton>
          <DialogButton type="button">取消</DialogButton>
        </DialogButtons>
      </DialogBody>
    </Dialog>
  );
};

const MenuList = ({ names }: { names: string[] }) => (
  <>
    {names.map((name) => (
      <MenuButton type="button" key={name}>
        {name}
      </MenuButton>
    ))}
  </>
);

export default function App() {
  return (
    <Page>
      <GlobalStyle />
      <MenuBar>
        <MenuGroup>
          <MenuList names={EDIT_MENUS} />
        </MenuGroup>
        <MenuGroup $before={4} $gap={12}>
          <MenuList names={APP_MENUS} />
        </MenuGroup>
        <MenuGroup $gap={5}>
          <MenuButton type="button">
            <Icon name="docPlus" />
            新建变更
            <Arrow $before={3} />
          </MenuButton>
          <MenuButton type="button">
            <Icon name="mascot" />
            广小二
          </MenuButton>
        </MenuGroup>
        <MenuGroup $before={28}>
          <MenuButton type="button" $tone="#1d6f6f">
            多边形编辑器的网格尺..
          </MenuButton>
        </MenuGroup>
        <Spring />
        <MenuGroup $gap={9}>
          <MenuButton type="button">
            <Icon name="user" />
            13907298339
            <Arrow $before={3} />
          </MenuButton>
          <MenuButton type="button">造价豆:0</MenuButton>
          <MenuButton type="button" aria-label="消息">
            <Icon name="bell" />
          </MenuButton>
        </MenuGroup>
        <MenuGroup $before={28}>
          <More type="button">»</More>
        </MenuGroup>
      </MenuBar>

      <ToolBar>
        <Tools>
          <Tool icon="newDoc" />
          <Tool icon="open" arrow={7} />
          <Tool icon="save" />
          <Sep />
          <Tool icon="undo" arrow={7} />
        </Tools>
        <Tools $before={9}>
          <More type="button">»</More>
        </Tools>
        <Tools $before={3}>
          <Tool icon="paint" label="绘图" />
          <Tool icon="sigma" label="汇总计算" />
          <Tool icon="cloudCheck" label="云检查" />
          <Tool icon="slabTop" label="平齐板顶" off />
          <Tool icon="binocular" label="查找图元" off />
          <Tool icon="glasses" label="查看钢筋量" off />
          <Tool icon="batch" label="批量选择" off />
        </Tools>
        <Tools $before={31}>
          <More type="button">»</More>
        </Tools>
        <Tools $gap={6}>
          <Combo $framed>
            <Icon name="view2d" />
            <Select $w={27} aria-label="视图模式" defaultValue="二维">
              <option>二维</option>
            </Select>
            <Arrow $off />
          </Combo>
          <Tool icon="cube" label="俯视" off arrow={7} />
          <Tool icon="orbit" label="动态观察" off />
          <Tool icon="local3d" label="局部三维" off />
          <Sep />
          <Tool icon="fullscreen" label="全屏" off />
          <Tool icon="zoomIn" label="缩放" off arrow={7} />
          <Tool icon="pan" label="平移" off arrow={7} />
          <Tool icon="rotate" label="屏幕旋转" off arrow={3} />
          <Sep />
          <Tool icon="floors" label="选择楼层" off />
        </Tools>
        <Spring />
        <More type="button">»</More>
      </ToolBar>

      <Work>
        <Nav>
          <NavHeader>
            <span>模块导航栏</span>
            <Spring />
            <button type="button" aria-label="固定">
              <Icon name="pin" size={15} />
            </button>
            <button type="button" aria-label="关闭">
              <Icon name="close" size={14} />
            </button>
          </NavHeader>
          <NavButton type="button">工程设置</NavButton>
          <NavButton type="button">绘图输入</NavButton>
          <NavTools>
            <Tool icon="plus2" />
            <Tool icon="minus2" />
          </NavTools>
          <TreeFrame>
            <TreeList>
              {TREE.map((node, i) => (
                <TreeRow node={node} key={i} />
              ))}
            </TreeList>
            <ScrollTrack>
              <ScrollEnd type="button" aria-label="向上滚动">
                <Icon name="chevUp" />
              </ScrollEnd>
              <Thumb />
              <ScrollEnd type="button" aria-label="向下滚动">
                <Icon name="chevDown" />
              </ScrollEnd>
            </ScrollTrack>
          </TreeFrame>
          <NavButton type="button">单构件输入</NavButton>
          <NavButton type="button">报表预览</NavButton>
        </Nav>

        <Stage>
          <ToolBar>
            <Tool icon="addItem" label="新建" arrow={2} />
            <Tool icon="cross" label="删除" />
            <Tool icon="copy" label="复制" />
            <Tool icon="rename" label="重命名" />
            <Tools $gap={4}>
              <Sep />
              <label htmlFor="floor">楼层</label>
              <Combo>
                <Select id="floor" $w={48} defaultValue="首层">
                  <option>首层</option>
                </Select>
                <Arrow />
              </Combo>
              <Sep />
              <Tool icon="sort" label="排序" arrow={2} />
            </Tools>
            <Tool icon="filter" label="过滤" arrow={2} />
            <Sep />
            <Tool icon="fromFloor" label="从其他楼层复制构件" />
            <Tool icon="toFloor" label="复制构件到其他楼层" />
            <Sep />
            <Tool label="查找" arrow={2} />
            <Sep />
            <Tool icon="up" label="上移" />
            <Tool icon="down" label="下移" off />
          </ToolBar>
          <Panes>
            <ListPane>
              <SearchRow>
                <SearchInput placeholder="搜索构件..." aria-label="搜索构件" />
                <SearchButton type="button" aria-label="搜索">
                  <Icon name="search" />
                </SearchButton>
              </SearchRow>
              <ItemFrame>
                <TreeList>
                  <Branch>
                    <Rail>
                      <Icon name="chevDown" />
                    </Rail>
                    <Leaf>
                      <Icon name="tieColumn" />
                      <span>构造柱</span>
                    </Leaf>
                  </Branch>
                  {ITEMS.map((name, i) => (
                    <Branch key={name}>
                      <Rail />
                      <Elbow $last={i === ITEMS.length - 1} />
                      <Leaf $bg={name === "GZ-8" ? "#2f63c0" : undefined}>
                        <Icon name="gear" />
                        <Mixed text={name} />
                      </Leaf>
                    </Branch>
                  ))}
                </TreeList>
              </ItemFrame>
            </ListPane>
            <PropertyPane>
              <PropertyTabs>
                <PropertyTab type="button">属性编辑</PropertyTab>
              </PropertyTabs>
              <SectionWindow>
                <SectionTitle>截面编辑</SectionTitle>
                <SectionTabs>
                  <SectionTab type="button" $active>
                    截面
                  </SectionTab>
                  <SectionTab type="button">配筋</SectionTab>
                </SectionTabs>
                <SectionBody>
                  <SectionBar>
                    <Grip />
                    <Tool icon="grid" label="定义网格" />
                    <Sep />
                    <Tool icon="line" label="画直线" off />
                    <Tool icon="arc" label="画弧" off />
                    <Tool icon="circle" label="画圆" off />
                    <Sep />
                    <Tool icon="cross" label="清除多边形" />
                    <Sep />
                    <Tool icon="undo" label="回退" />
                    <Sep />
                    <Tool icon="importIcon" label="导入" />
                    <Tool icon="exportIcon" label="导出" />
                    <Sep />
                    <Tool icon="magnify" label="查询多边形库" />
                  </SectionBar>
                  <SectionBar>
                    <Grip />
                    <RadioGroup>
                      {["不偏移", "正交", "极坐标"].map((label, i) => (
                        <RadioLabel key={label}>
                          <Radio type="radio" name="offset" defaultChecked={i === 0} />
                          {label}
                        </RadioLabel>
                      ))}
                    </RadioGroup>
                    <Sep />
                    <Offsets>
                      <Offset axis="X" />
                      <Offset axis="Y" />
                    </Offsets>
                  </SectionBar>
                  <Canvas>
                    <Drawing />
                  </Canvas>
                  <InputBar>
                    <InputButton type="button">动态输入</InputButton>
                  </InputBar>
                </SectionBody>
                <StatusBar>
                  <StatusCell $w={147}>
                    <Mixed text="(X: -488 Y: 274)" />
                  </StatusCell>
                  <StatusCell>请选择下一点</StatusCell>
                  <SizeGrip />
                </StatusBar>
              </SectionWindow>
            </PropertyPane>
          </Panes>
        </Stage>
      </Work>

      <GridDialog />

      <Floating>
        <FloatingTitle>
          Poi...
          <FloatingClose type="button" aria-label="关闭">
            <Icon name="close" size={10} />
          </FloatingClose>
        </FloatingTitle>
        <FloatingButton type="button">开始</FloatingButton>
      </Floating>
    </Page>
  );
}
